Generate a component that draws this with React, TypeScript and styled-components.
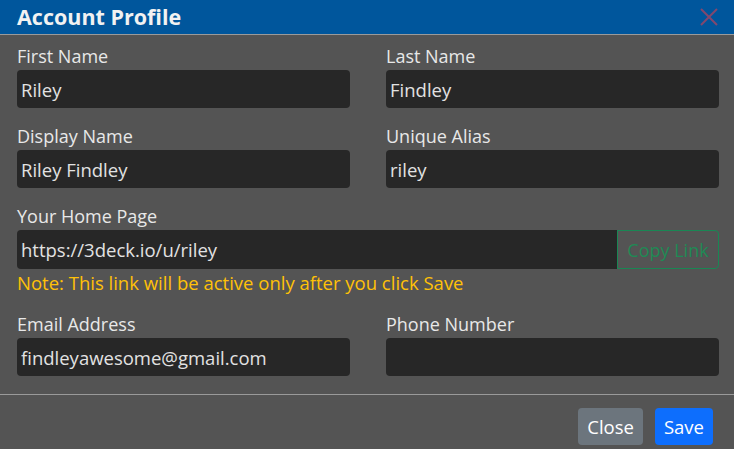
import React from 'react';
import styled, { createGlobalStyle } from 'styled-components';

const GlobalStyle = createGlobalStyle`
  html, body {
    margin: 0;
    padding: 0;
    background: #545454;
    font-family: "Open Sans", "Noto Sans", sans-serif;
  }
  * { box-sizing: border-box; }
`;

const Modal = styled.div`
  width: 734px;
  height: 449px;
  background: #545454;
  display: flex;
  flex-direction: column;
  overflow: hidden;
`;

const Header = styled.div`
  height: 35px;
  background: #00569c;
  border-bottom: 1px solid #9a9a9a;
  display: flex;
  align-items: center;
  justify-content: space-between;
  padding: 0 15px 0 17px;
`;

const Title = styled.h1`
  margin: 0;
  font-size: 21.5px;
  font-weight: 700;
  color: #f2f2f2;
  line-height: 26px;
`;

const CloseIcon = styled.button`
  border: none;
  background: transparent;
  padding: 0;
  width: 20px;
  height: 20px;
  display: flex;
  cursor: pointer;
`;

const Body = styled.div`
  padding: 9px 15px 18px 17px;
  border-bottom: 1px solid #9a9a9a;
  display: flex;
  flex-direction: column;
  gap: 16px;
`;

const Row = styled.div`
  display: grid;
  grid-template-columns: 1fr 1fr;
  column-gap: 36px;
`;

const Field = styled.div`
  display: flex;
  flex-direction: column;
`;

const Label = styled.label`
  font-size: 18px;
  line-height: 24px;
  color: #e8e8e8;
  margin-bottom: 2px;
  white-space: nowrap;
`;

const Input = styled.input`
  height: 38px;
  width: 100%;
  background: #272727;
  border: none;
  border-radius: 4px;
  padding: 0 4px;
  font-family: inherit;
  font-size: 18.5px;
  color: #e2e2e2;
  outline: none;
`;

const Group = styled.div`
  display: flex;
  height: 39px;
`;

const GroupInput = styled(Input)`
  flex: 1;
  height: 39px;
  border-radius: 4px 0 0 4px;
`;

const OutlineButton = styled.button`
  width: 102px;
  background: transparent;
  border: 1px solid #198754;
  border-radius: 0 4px 4px 0;
  color: #1f8a55;
  font-family: inherit;
  font-size: 18px;
  padding: 0;
  white-space: nowrap;
`;

const Note = styled.div`
  font-size: 18.5px;
  line-height: 24px;
  height: 24px;
  color: #ffc107;
  margin: 2px 0 1px;
  white-space: nowrap;
`;

const Footer = styled.div`
  flex: 1;
  display: flex;
  justify-content: flex-end;
  align-items: flex-start;
  gap: 12px;
  padding: 13px 21px 0 0;
`;

const Button = styled.button<{ $variant: 'secondary' | 'primary' }>`
  height: 37px;
  border: none;
  border-radius: 4px;
  padding: 0 9px;
  font-family: inherit;
  font-size: 18.5px;
  color: #fff;
  background: ${(p) => (p.$variant === 'primary' ? '#0d6efd' : '#6c757d')};
`;

const App: React.FC = () => {
  return (
    <Modal>
      <GlobalStyle />
      <Header>
        <Title>Account Profile</Title>
        <CloseIcon aria-label="Close">
          <svg width="20" height="20" viewBox="0 0 20 20">
            <path d="M2 2 L18 18 M18 2 L2 18" stroke="#82486e" strokeWidth="2" />
          </svg>
        </CloseIcon>
      </Header>
      <Body>
        <Row>
          <Field>
            <Label>First Name</Label>
            <Input defaultValue="Riley" />
          </Field>
          <Field>
            <Label>Last Name</Label>
            <Input defaultValue="Findley" />
          </Field>
        </Row>
        <Row>
          <Field>
            <Label>Display Name</Label>
            <Input defaultValue="Riley Findley" />
          </Field>
          <Field>
            <Label>Unique Alias</Label>
            <Input defaultValue="riley" />
          </Field>
        </Row>
        <Field>
          <Label>Your Home Page</Label>
          <Group>
            <GroupInput defaultValue="https://3deck.io/u/riley" />
            <OutlineButton>Copy Link</OutlineButton>
          </Group>
          <Note>Note: This link will be active only after you click Save</Note>
        </Field>
        <Row>
          <Field>
            <Label>Email Address</Label>
            <Input defaultValue="findleyawesome@gmail.com" />
          </Field>
          <Field>
            <Label>Phone Number</Label>
            <Input defaultValue="" />
          </Field>
        </Row>
      </Body>
      <Footer>
        <Button $variant="secondary">Close</Button>
        <Button $variant="primary">Save</Button>
      </Footer>
    </Modal>
  );
};

export default App;
